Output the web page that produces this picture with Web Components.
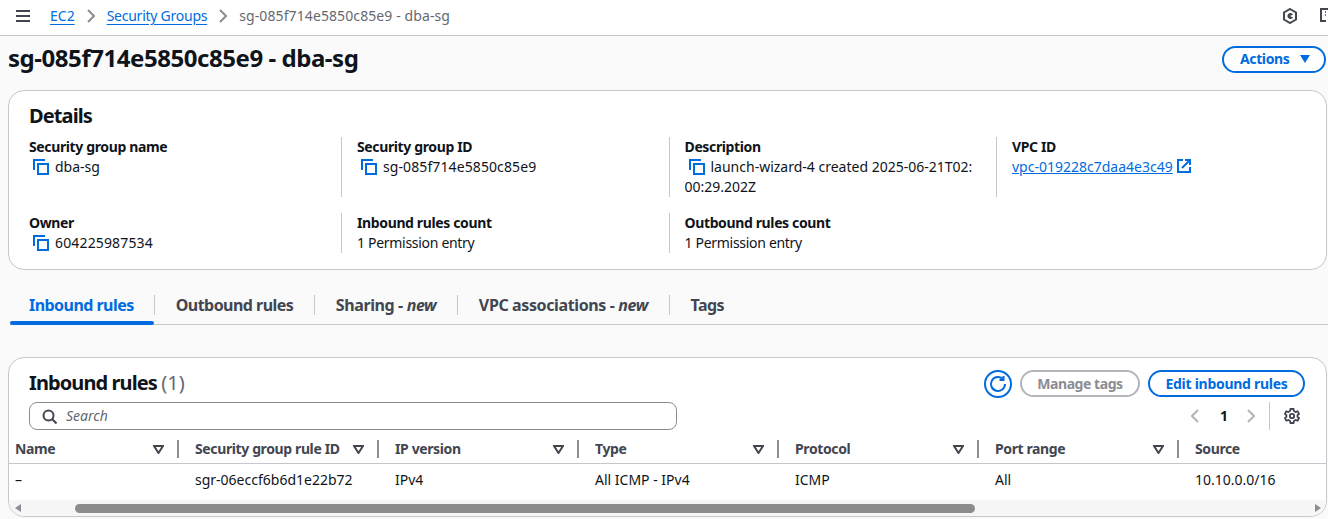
<!DOCTYPE html>
<html>
<head>
<meta charset="utf-8">
<style>
    html, body { margin: 0; height: 519px; overflow: hidden; }
    body { background: #fafafa; color: #0f141a; font-family: "Noto Sans", sans-serif; font-size: 14px; line-height: 20px; }
    aws-details { margin: 8px 1px 0 8px; }
    aws-tabs { margin: 25px 0 0 10px; }
    aws-rules { margin: 32px 1px 0 8px; }
</style>
</head>
<body>
<aws-topbar></aws-topbar>
<aws-header></aws-header>
<aws-details>
    <aws-kv label="Security group name" copy>dba-sg</aws-kv>
    <aws-kv label="Security group ID" copy style="letter-spacing:.1px">sg-085f714e5850c85e9</aws-kv>
    <aws-kv label="Description" copy>launch-wizard-4 created 2025-06-21T02:<br>00:29.202Z</aws-kv>
    <aws-kv label="VPC ID" link>vpc-019228c7daa4e3c49</aws-kv>
    <aws-kv label="Owner" copy style="letter-spacing:.15px">604225987534</aws-kv>
    <aws-kv label="Inbound rules count" style="letter-spacing:-.3px">1 Permission entry</aws-kv>
    <aws-kv label="Outbound rules count" style="letter-spacing:-.3px">1 Permission entry</aws-kv>
</aws-details>
<aws-tabs></aws-tabs>
<aws-rules></aws-rules>

<script>
const BLUE = "#006ce0";

class AwsTopbar extends HTMLElement {
    constructor() {
        super();
        this.attachShadow({ mode: "open" }).innerHTML = `
<style>
    :host { display: flex; align-items: center; height: 35px; box-sizing: content-box; background: #fff; border-bottom: 1px solid #c6c6cd; color: #656871; overflow: hidden; }
    .wrap { display: flex; align-items: center; flex: 1; height: 31px; margin-bottom: 4px; }
    .menu { margin: 0 20px 0 16px; display: flex; }
    a { color: ${BLUE}; text-decoration: underline; text-underline-offset: 3px; }
    a.sg { letter-spacing: -0.25px; }
    .sep { display: flex; margin: 0 12px; }
    .cur { letter-spacing: 0.1px; }
    .sp { flex: 1; }
    .hex { display: flex; margin-right: 21px; }
    .cut { display: flex; margin-right: -9px; }
</style>
<div class="wrap">
<svg class="menu" width="14" height="12" viewBox="0 0 14 12"><path d="M0 1h14M0 6h14M0 11h14" stroke="#424650" stroke-width="2"/></svg>
<a>EC2</a>
<svg class="sep" width="8" height="14" viewBox="0 0 8 14"><path d="M1 1l6 6-6 6" fill="none" stroke="#8c8c94" stroke-width="2"/></svg>
<a class="sg">Security Groups</a>
<svg class="sep" width="8" height="14" viewBox="0 0 8 14"><path d="M1 1l6 6-6 6" fill="none" stroke="#8c8c94" stroke-width="2"/></svg>
<span class="cur">sg-085f714e5850c85e9 - dba-sg</span>
<span class="sp"></span>
<svg class="hex" width="16" height="16" viewBox="0 0 16 16" fill="none" stroke="#424650" stroke-width="2"><path d="M8 1l6 3.500v7L8 15l-6-3.500v-7z"/><path d="M11 9.500A3 3 0 1 1 11 6.500L8 8z" fill="#424650" stroke="none"/></svg>
<svg class="cut" width="18" height="18" viewBox="0 0 18 18" fill="none" stroke="#424650" stroke-width="2"><path d="M7 14H2V2h14v8"/><path d="M6 5h1M9 5h1M12 5h1M6 8h1M9 8h1" stroke-width="1.600"/><path d="M9 13h6M12 10l3 3-3 3"/></svg>
</div>`;
    }
}

class AwsHeader extends HTMLElement {
    constructor() {
        super();
        this.attachShadow({ mode: "open" }).innerHTML = `
<style>
    :host { display: flex; align-items: center; justify-content: space-between; height: 46px; padding: 0 2px 0 8px; }
    h1 { margin: -2px 0 0; font-size: 24px; line-height: 28px; font-weight: 700; letter-spacing: -0.45px; }
    button { display: flex; align-items: center; gap: 11px; height: 27px; width: 104px; box-sizing: border-box; padding: 0 0 1px 16px; border: 2px solid ${BLUE}; border-radius: 14px; background: #fff; color: ${BLUE}; font: 700 14px "Noto Sans", sans-serif; letter-spacing: -0.38px; }
</style>
<h1>sg-085f714e5850c85e9 - dba-sg</h1>
<button>Actions <svg width="10" height="8" viewBox="0 0 10 8"><path d="M0 0h10L5 8z" fill="${BLUE}"/></svg></button>`;
    }
}

class AwsDetails extends HTMLElement {
    constructor() {
        super();
        this.attachShadow({ mode: "open" }).innerHTML = `
<style>
    :host { display: block; height: 180px; box-sizing: border-box; padding: 13px 20px 0; background: #fff; border: 1px solid #c6c6cd; border-radius: 16px; }
    h2 { margin: 0 0 9px; font-size: 20px; line-height: 24px; font-weight: 700; letter-spacing: -0.9px; }
    .grid { display: grid; grid-template-columns: 312px 327.500px 327.500px 300px; grid-template-rows: 60px 40px; row-gap: 16px; }
</style>
<h2>Details</h2>
<div class="grid"><slot></slot></div>`;
    }
}

class AwsKv extends HTMLElement {
    constructor() {
        super();
        const root = this.attachShadow({ mode: "open" });
        const copy = this.hasAttribute("copy") ? `<svg class="copy" width="16" height="16" viewBox="0 0 16 16" fill="none" stroke="${BLUE}" stroke-width="2"><path d="M1 11V1h11"/><path d="M5 5h10v10H5z"/></svg>` : "";
        const ext = this.hasAttribute("link") ? `<svg class="ext" width="14" height="14" viewBox="0 0 14 14" fill="none" stroke="${BLUE}" stroke-width="2"><path d="M6 1H1v12h12V8"/><path d="M5 9l7-7M8 1h5v5"/></svg>` : "";
        const value = this.hasAttribute("link") ? `<a><slot></slot></a>${ext}` : `<slot></slot>`;
        root.innerHTML = `
<style>
    :host { display: block; padding-left: 15px; border-left: 1px solid #c6c6cd; }
    :host(:nth-child(4n+1)) { border-left: 0; padding-left: 0; }
    .label { font-weight: 700; letter-spacing: -0.37px; }
    .copy { margin: 0 6px 0 4px; vertical-align: -3px; }
    a { color: ${BLUE}; text-decoration: underline; }
    .ext { margin-left: 4px; vertical-align: -1px; }
</style>
<div class="label">${this.getAttribute("label")}</div>
<div>${copy}${value}</div>`;
    }
}

class AwsTabs extends HTMLElement {
    constructor() {
        super();
        const tabs = ["Inbound rules", "Outbound rules", "Sharing - <i>new</i>", "VPC associations - <i>new</i>", "Tags"];
        this.attachShadow({ mode: "open" }).innerHTML = `
<style>
    :host { display: flex; height: 29px; border-bottom: 1px solid #c6c6cd; font-size: 16px; font-weight: 700; color: #424650; }
    .tab { display: flex; align-items: flex-start; padding: 0 20.500px 0 22px; position: relative; letter-spacing: -0.54px; }
    .tab.wide { letter-spacing: -0.38px; }
    .tab span { line-height: 20px; }
    .tab + .tab::before { content: ""; position: absolute; left: 0; top: 0; height: 20px; width: 1px; background: #c6c6cd; }
    .active { color: ${BLUE}; padding: 0 20px 0 19px; }
    .active::after { content: ""; position: absolute; left: 0; right: 0; bottom: -1px; height: 4px; background: ${BLUE}; border-radius: 2px; }
</style>
${tabs.map((t, i) => `<div class="tab ${i == 0 ? "active" : ""} ${t.includes("new") ? "wide" : ""}"><span>${t}</span></div>`).join("")}`;
    }
}

class AwsRules extends HTMLElement {
    constructor() {
        super();
        const funnel = `<svg class="sort" width="11" height="9" viewBox="0 0 11 9"><path d="M1 1h9L5.500 8z" fill="none" stroke="#424650" stroke-width="2"/></svg>`;
        const cols = [
            ["Name", "–"],
            ["Security group rule ID", "sgr-06eccf6b6d1e22b72"],
            ["IP version", "IPv4"],
            ["Type", "All ICMP - IPv4"],
            ["Protocol", "ICMP"],
            ["Port range", "All"],
            ["Source", "10.10.0.0/16"]
        ];
        this.attachShadow({ mode: "open" }).innerHTML = `
<style>
    :host { display: block; height: 160px; box-sizing: border-box; background: #fff; border: 1px solid #c6c6cd; border-radius: 16px; overflow: hidden; }
    .top { display: flex; align-items: flex-start; height: 43px; padding: 12px 20px 0; box-sizing: border-box; }
    h2 { margin: -1px 0 0; font-size: 20px; line-height: 28px; font-weight: 700; flex: 1; letter-spacing: -0.9px; }
    h2 span { font-weight: 400; color: #656871; letter-spacing: 0; }
    .btn { height: 27px; box-sizing: border-box; border: 2px solid ${BLUE}; border-radius: 14px; color: ${BLUE}; background: #fff; font: 700 14px "Noto Sans", sans-serif; padding: 0; letter-spacing: -0.38px; }
    .refresh { width: 28px; height: 28px; border-radius: 50%; display: flex; align-items: center; justify-content: center; margin-right: 8px; }
    .off { border-color: #b4b4bb; color: #8c8c94; width: 120px; margin-right: 8px; letter-spacing: -0.45px; }
    .edit { width: 157px; margin-right: 1px; letter-spacing: -0.28px; }
    .tools { display: flex; align-items: center; height: 29px; padding: 1px 26px 0 20px; box-sizing: border-box; }
    .search { display: flex; align-items: center; width: 648px; height: 28px; box-sizing: border-box; border: 1px solid #8c8c94; border-radius: 8px; padding-left: 12px; gap: 9px; color: #656871; font-style: italic; }
    .pager { flex: 1; display: flex; align-items: center; justify-content: flex-end; }
    .num { font-weight: 700; margin: 0 19px 0 21px; }
    .rule { width: 1px; height: 28px; background: #c6c6cd; margin: 0 14px; }
    .gear { display: flex; }
    .table { display: grid; grid-template-columns: 170px repeat(6, 200px); grid-template-rows: 27px 36px; overflow: hidden; margin-top: 7px; }
    .th { display: flex; align-items: center; box-sizing: border-box; border-bottom: 1px solid #c6c6cd; padding: 0 0 2px 16px; color: #424650; white-space: nowrap; }
    .th.first, .td.first { padding-left: 6px; }
    .th b { font-weight: 700; flex: 1; letter-spacing: -0.38px; }
    .sort { margin-right: 13px; }
    .th i { width: 2px; height: 18px; background: #8c8c94; }
    .th.last i, .th.last .sort { display: none; }
    .td { padding: 6px 0 0 16px; white-space: nowrap; }
    .bar { display: flex; align-items: center; height: 16px; background: #f6f6f6; padding: 0 5px 0 6px; }
    .arrow { width: 0; height: 0; border-style: solid; border-color: transparent; border-width: 4px 0; }
    .l { border-right: 6px solid #8c8c94; }
    .r { border-left: 6px solid #8c8c94; margin-left: auto; }
    .thumb { width: 900px; height: 9px; border-radius: 5px; background: #8c8c8c; margin-left: 54px; }
</style>
<div class="top">
    <h2>Inbound rules <span>(1)</span></h2>
    <button class="btn refresh"><svg width="18" height="18" viewBox="0 0 18 18" fill="none" stroke="${BLUE}" stroke-width="2"><path d="M16 9a7 7 0 1 1-2.200-5.100"/><path d="M14.500 1v4h-4"/></svg></button>
    <button class="btn off">Manage tags</button>
    <button class="btn edit">Edit inbound rules</button>
</div>
<div class="tools">
    <div class="search">
        <svg width="15" height="15" viewBox="0 0 15 15" fill="none" stroke="#424650" stroke-width="2"><circle cx="6.500" cy="6.500" r="5"/><path d="M10 10l4.500 4.500"/></svg>
        <span>Search</span>
    </div>
    <div class="pager">
        <svg width="8" height="14" viewBox="0 0 8 14"><path d="M7 1L1 7l6 6" fill="none" stroke="#b4b4bb" stroke-width="2"/></svg>
        <span class="num">1</span>
        <svg width="8" height="14" viewBox="0 0 8 14"><path d="M1 1l6 6-6 6" fill="none" stroke="#b4b4bb" stroke-width="2"/></svg>
        <span class="rule"></span>
        <svg class="gear" width="16" height="16" viewBox="0 0 16 16" fill="none" stroke="#424650" stroke-width="1.800"><path d="M6.500 1h3l.4 2 1.700 1 2-.7 1.400 2.600-1.500 1.300v1.600l1.500 1.300-1.400 2.600-2-.7-1.700 1-.4 2h-3l-.4-2-1.700-1-2 .7L.9 10.100l1.500-1.300V7.200L.9 5.900l1.400-2.600 2 .7 1.700-1z"/><circle cx="8" cy="8" r="2.200"/></svg>
    </div>
</div>
<div class="table">
    ${cols.map((c, i) => `<div class="th ${i == 0 ? "first" : ""} ${i == 6 ? "last" : ""}"><b>${c[0]}</b>${funnel}<i></i></div>`).join("")}
    ${cols.map((c, i) => `<div class="td ${i == 0 ? "first" : ""}">${c[1]}</div>`).join("")}
</div>
<div class="bar"><span class="arrow l"></span><span class="thumb"></span><span class="arrow r"></span></div>`;
    }
}

customElements.define("aws-topbar", AwsTopbar);
customElements.define("aws-header", AwsHeader);
customElements.define("aws-details", AwsDetails);
customElements.define("aws-kv", AwsKv);
customElements.define("aws-tabs", AwsTabs);
customElements.define("aws-rules", AwsRules);
</script>
</body>
</html>
